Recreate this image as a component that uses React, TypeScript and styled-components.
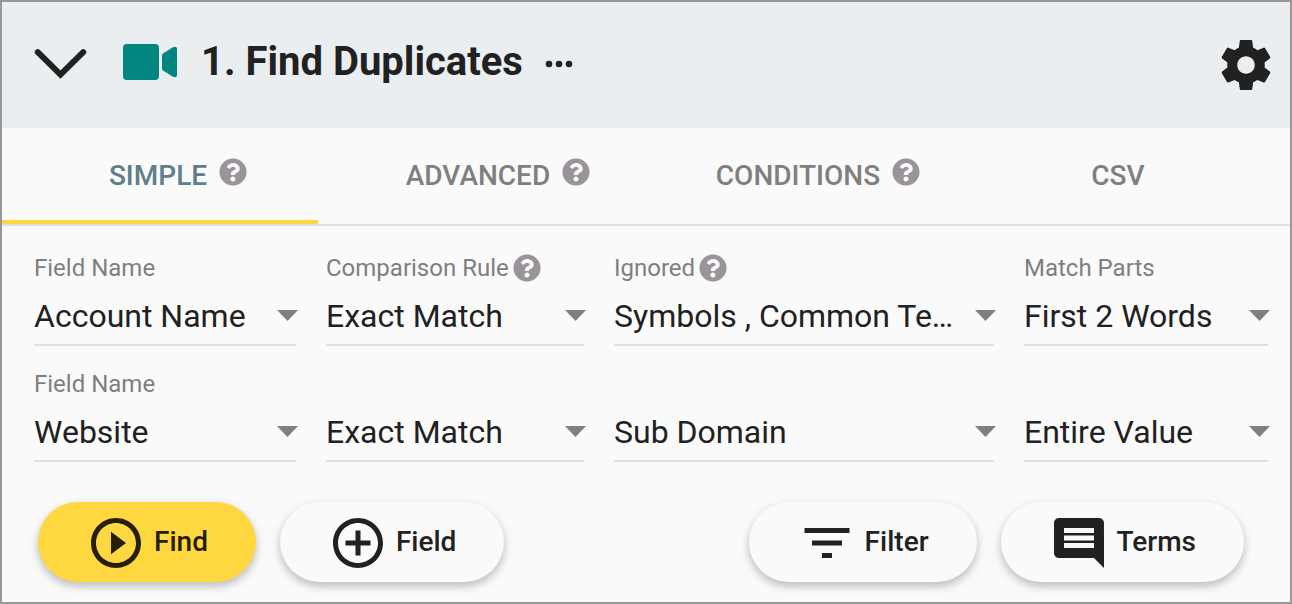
import React, { useId } from "react";
import styled, { createGlobalStyle } from "styled-components";
import { FaQuestionCircle } from "react-icons/fa";
import {
  MdAddCircleOutline,
  MdComment,
  MdFilterList,
  MdPlayCircleOutline,
} from "react-icons/md";

const GlobalStyle = createGlobalStyle`
  *, *::before, *::after { box-sizing: border-box; }
  body {
    margin: 0;
    background: #fafafa;
    color: #212121;
    font-family: Roboto, "Liberation Sans", sans-serif;
  }
  button, select { font: inherit; color: inherit; }
`;

const Card = styled.main`
  overflow: hidden;
  border: 2px solid #979797;
  background: #fafafa;
`;

const Header = styled.header`
  display: flex;
  align-items: center;
  justify-content: space-between;
  height: 126px;
  padding: 0 14px 0 32px;
  background: #ebeef1;
`;

const HeaderMain = styled.div`
  display: flex;
  align-items: center;
  padding-bottom: 2px;
`;

const TitleGroup = styled.div`
  display: flex;
  align-items: center;
  gap: 22px;
  padding: 0 22px 4px 36px;
`;

const IconButton = styled.button`
  display: flex;
  flex: none;
  padding: 0;
  border: 0;
  background: none;
  cursor: pointer;
`;

const Title = styled.h1`
  margin: 0;
  font-size: 40px;
  line-height: 48px;
  font-weight: 700;
  white-space: nowrap;
`;

const Spacer = styled.div`
  flex: 1;
`;

/* The strip starts slightly outside the card, which clips its left edge. */
const Tabs = styled.div`
  display: grid;
  grid-template-columns: repeat(4, 1fr);
  height: 98px;
  margin-left: -4px;
  padding-right: 12px;
  border-bottom: 2px solid #e0e0e0;
`;

const Tab = styled.button<{ $active?: boolean }>`
  display: grid;
  grid-template-columns: 1fr auto 1fr;
  align-items: center;
  gap: 12px;
  padding: 4px 0 0;
  border: 0;
  border-bottom: 4px solid ${(p) => (p.$active ? "#fdd740" : "transparent")};
  background: none;
  color: ${(p) => (p.$active ? "#607d8b" : "#7f7f7f")};
  font-size: 28px;
  line-height: 32px;
  font-weight: 500;
  cursor: pointer;
`;

const TabLabel = styled.span`
  grid-column: 2;
`;

const TabHelp = styled.span`
  display: flex;
  padding-bottom: 8px;
`;

const HelpMark = styled(FaQuestionCircle)`
  flex: none;
  width: 28px;
  height: 28px;
  color: #9a949a;
`;

const Fields = styled.div`
  display: grid;
  grid-template-columns: 262fr 258fr 380fr 244fr;
  column-gap: 30px;
  padding: 4px 22px 0 32px;
`;

const Field = styled.div`
  display: flex;
  flex-direction: column;
  min-width: 0;
  padding-top: 24px;
`;

const FieldLabel = styled.label`
  display: flex;
  align-items: center;
  gap: 4px;
  height: 28px;
  color: #7f7f7f;
  font-size: 24px;
  line-height: 28px;
  white-space: nowrap;
`;

const SelectBox = styled.div`
  display: grid;
  grid-template-columns: minmax(0, 1fr);
  align-items: center;
`;

const Select = styled.select`
  grid-area: 1 / 1;
  width: 100%;
  height: 64px;
  padding: 14px 40px 8px 0;
  border: 0;
  border-bottom: 2px solid #e0e0e0;
  border-radius: 0;
  appearance: none;
  background: none;
  font-size: 32px;
  line-height: 40px;
  text-overflow: ellipsis;
  overflow: hidden;
  white-space: nowrap;
  cursor: pointer;
`;

const Arrow = styled.svg`
  grid-area: 1 / 1;
  justify-self: end;
  margin: 2px -2px 0 0;
  pointer-events: none;
`;

const Actions = styled.div`
  display: flex;
  gap: 24px;
  padding: 40px 46px 20px 36px;
`;

const ActionButton = styled.button<{ $primary?: boolean }>`
  display: flex;
  align-items: center;
  gap: 8px;
  height: 80px;
  padding: 2px 48px 0;
  border: 0;
  border-radius: 40px;
  background: ${(p) => (p.$primary ? "#ffd740" : "#fafafa")};
  color: ${(p) => (p.$primary ? "#261e06" : "#212121")};
  box-shadow: 0 4px 10px rgba(0, 0, 0, 0.26);
  font-size: 28px;
  line-height: 32px;
  font-weight: 500;
  white-space: nowrap;
  cursor: pointer;
`;

const ActionText = styled.span`
  padding-bottom: 2px;
`;

type SelectFieldProps = { label?: string; name: string; value: string; help?: boolean };

function SelectField({ label, name, value, help }: SelectFieldProps) {
  const id = useId();
  return (
    <Field>
      <FieldLabel htmlFor={id}>
        {label}
        {help && <HelpMark />}
      </FieldLabel>
      <SelectBox>
        <Select id={id} aria-label={name} defaultValue={value}>
          <option>{value}</option>
        </Select>
        <Arrow width="21" height="12" viewBox="0 0 21 12" aria-hidden="true">
          <path d="M0 1h21L10.500 12z" fill="#7f7f7f" />
        </Arrow>
      </SelectBox>
    </Field>
  );
}

const tabs = [
  { label: "SIMPLE", help: true },
  { label: "ADVANCED", help: true },
  { label: "CONDITIONS", help: true },
  { label: "CSV", help: false },
];

const fields: SelectFieldProps[] = [
  { label: "Field Name", name: "Field Name", value: "Account Name" },
  { label: "Comparison Rule", name: "Comparison Rule", value: "Exact Match", help: true },
  { label: "Ignored", name: "Ignored", value: "Symbols , Common Terms", help: true },
  { label: "Match Parts", name: "Match Parts", value: "First 2 Words" },
  { label: "Field Name", name: "Field Name", value: "Website" },
  { name: "Comparison Rule", value: "Exact Match" },
  { name: "Ignored", value: "Sub Domain" },
  { name: "Match Parts", value: "Entire Value" },
];

export default function App() {
  return (
    <>
      <GlobalStyle />
      <Card>
        <Header>
          <HeaderMain>
            <IconButton aria-label="Collapse">
              <svg width="53" height="30" viewBox="0 0 53 30">
                <path
                  d="M3.800 3.200L26.500 25.600L49.200 3.200"
                  fill="none"
                  stroke="#212121"
                  strokeWidth="6"
                  strokeLinecap="round"
                />
              </svg>
            </IconButton>
            <TitleGroup>
              <svg width="56" height="36" viewBox="0 0 56 36" aria-hidden="true">
                <rect width="36" height="36" rx="4" fill="#008580" />
                <path
                  d="M39 11.500Q39 10.300 40 9.500L49.500 3.500Q54 1.500 54 5V31Q54 34.500 49.500 32.500L40 26.500Q39 25.700 39 24.500z"
                  fill="#008580"
                />
              </svg>
              <Title>1. Find Duplicates</Title>
            </TitleGroup>
            <IconButton aria-label="More options">
              <svg width="28" height="8" viewBox="0 0 28 8">
                <circle cx="4" cy="4" r="3.300" fill="#212121" />
                <circle cx="14" cy="4" r="3.300" fill="#212121" />
                <circle cx="24" cy="4" r="3.300" fill="#212121" />
              </svg>
            </IconButton>
          </HeaderMain>
          <IconButton aria-label="Settings">
            <svg width="60" height="60" viewBox="0 0 24 24" fill="#212121">
              <path d="M19.430 12.980c.04-.32.07-.64.07-.98s-.03-.66-.07-.98l2.110-1.650c.19-.15.24-.42.12-.64l-2-3.460c-.12-.22-.39-.3-.61-.22l-2.490 1c-.52-.4-1.080-.73-1.690-.98l-.38-2.650C14.460 2.180 14.250 2 14 2h-4c-.25 0-.46.18-.49.42l-.38 2.650c-.61.25-1.170.59-1.690.98l-2.490-1c-.23-.09-.49 0-.61.22l-2 3.460c-.13.22-.07.49.12.64l2.110 1.650c-.04.32-.07.65-.07.98s.03.66.07.98l-2.110 1.650c-.19.15-.24.42-.12.64l2 3.460c.12.22.39.3.61.22l2.490-1c.52.4 1.080.73 1.690.98l.38 2.650c.03.24.24.42.49.42h4c.25 0 .46-.18.49-.42l.38-2.650c.61-.25 1.170-.59 1.690-.98l2.490 1c.23.09.49 0 .61-.22l2-3.460c.12-.22.07-.49-.12-.64l-2.110-1.650zM12 15.500c-1.930 0-3.500-1.570-3.500-3.500s1.570-3.500 3.500-3.500 3.500 1.570 3.500 3.500-1.570 3.500-3.500 3.500z" />
            </svg>
          </IconButton>
        </Header>
        <Tabs role="tablist">
          {tabs.map((tab, i) => (
            <Tab key={tab.label} role="tab" aria-selected={i === 0} $active={i === 0}>
              <TabLabel>{tab.label}</TabLabel>
              {tab.help && (
                <TabHelp>
                  <HelpMark />
                </TabHelp>
              )}
            </Tab>
          ))}
        </Tabs>
        <Fields>
          {fields.map((field, i) => (
            <SelectField key={i} {...field} />
          ))}
        </Fields>
        <Actions>
          <ActionButton $primary>
            <MdPlayCircleOutline size={60} />
            <ActionText>Find</ActionText>
          </ActionButton>
          <ActionButton>
            <MdAddCircleOutline size={60} />
            <ActionText>Field</ActionText>
          </ActionButton>
          <Spacer />
          <ActionButton>
            <MdFilterList size={60} />
            <ActionText>Filter</ActionText>
          </ActionButton>
          <ActionButton>
            <MdComment size={60} />
            <ActionText>Terms</ActionText>
          </ActionButton>
        </Actions>
      </Card>
    </>
  );
}
